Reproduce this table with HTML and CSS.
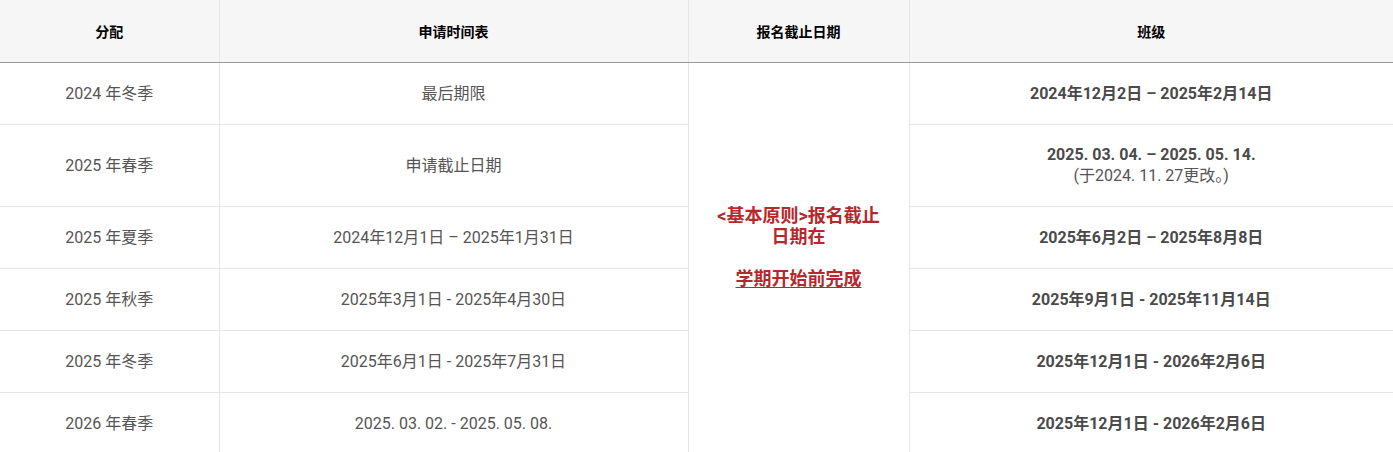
FILE: index.html
```html
<!DOCTYPE html>
<html lang="zh">
<head>
  <meta charset="UTF-8" />
  <meta name="viewport" content="width=device-width, initial-scale=1.0"/>
  <title>申请时间表</title>
  <link rel="stylesheet" href="styles.css">
</head>
<body>

<table class="schedule">
  <colgroup>
    <col class="c-term">
    <col class="c-apply">
    <col class="c-deadline">
    <col class="c-class">
  </colgroup>
  <thead>
    <tr>
      <th>分配</th>
      <th>申请时间表</th>
      <th>报名截止日期</th>
      <th>班级</th>
    </tr>
  </thead>
  <tbody>
    <tr>
      <td>2024 年冬季</td>
      <td>最后期限</td>
      <td class="deadline" rowspan="6">
        <span class="rule">&lt;基本原则&gt;报名截止日期在<br><br><u>学期开始前完成</u></span>
      </td>
      <td class="strong">2024年12月2日 – 2025年2月14日</td>
    </tr>
    <tr>
      <td>2025 年春季</td>
      <td>申请截止日期</td>
      <td class="strong">2025. 03. 04. – 2025. 05. 14.<br><span class="note">(于2024. 11. 27更改。)</span></td>
    </tr>
    <tr>
      <td>2025 年夏季</td>
      <td>2024年12月1日 – 2025年1月31日</td>
      <td class="strong">2025年6月2日 – 2025年8月8日</td>
    </tr>
    <tr>
      <td>2025 年秋季</td>
      <td>2025年3月1日 - 2025年4月30日</td>
      <td class="strong">2025年9月1日 - 2025年11月14日</td>
    </tr>
    <tr>
      <td>2025 年冬季</td>
      <td>2025年6月1日 - 2025年7月31日</td>
      <td class="strong">2025年12月1日 - 2026年2月6日</td>
    </tr>
    <tr>
      <td>2026 年春季</td>
      <td>2025. 03. 02. - 2025. 05. 08.</td>
      <td class="strong">2025年12月1日 - 2026年2月6日</td>
    </tr>
  </tbody>
</table>

</body>
</html>
```

FILE: styles.css
```css
* { box-sizing: border-box; }

body {
  margin: 0;
  font-family: Roboto, "Noto Sans CJK KR", "Noto Sans CJK SC", sans-serif;
  color: #555;
  background: #fff;
}

.schedule {
  width: 100%;
  border-collapse: collapse;
  table-layout: fixed;
}

.c-term { width: 219px; }
.c-apply { width: 469px; }
.c-deadline { width: 221px; }
.c-class { width: 484px; }

th {
  height: 62px;
  padding: 0 10px;
  background: #f6f6f6;
  color: #000;
  font-size: 14px;
  font-weight: 700;
  border-left: 1px solid #e6e6e6;
  border-bottom: 1px solid #999;
}

th:first-child, td:first-child { border-left: none; }

td {
  height: 62px;
  padding: 0 10px;
  font-size: 16px;
  line-height: 21px;
  text-align: center;
  vertical-align: middle;
  border-left: 1px solid #e6e6e6;
  border-bottom: 1px solid #e6e6e6;
}

tbody tr:nth-child(2) td { height: 82px; }

td.strong {
  font-weight: 700;
  color: #4a4a4a;
}

.note {
  font-weight: 400;
  color: #555;
}

td.deadline {
  height: auto;
  padding: 0 22px 22px;
  font-size: 18px;
  font-weight: 700;
  color: #b5292e;
}

.rule u { text-underline-offset: 2px; }
```
